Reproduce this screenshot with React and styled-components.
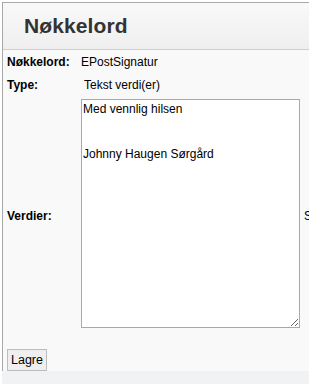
import React from 'react'
import styled, { createGlobalStyle } from 'styled-components'

const GlobalStyle = createGlobalStyle`
  html, body {
    margin: 0;
    padding: 0;
    background: #ffffff;
    overflow: hidden;
  }
  body {
    font-family: "Liberation Sans", Arial, sans-serif;
    font-size: 12px;
    color: #000;
  }
`

const Window = styled.div`
  height: 384px;
  padding: 2px 0 0 2px;
  box-sizing: border-box;
  display: flex;
  flex-direction: column;
`

const Panel = styled.div`
  flex: 1;
  display: flex;
  flex-direction: column;
  border-top: 1px solid #a9a9a9;
  border-left: 1px solid #a9a9a9;
  background: #f9f9f9;
`

const Header = styled.div`
  height: 47px;
  display: flex;
  align-items: center;
  padding: 0 0 1px 21px;
  box-sizing: border-box;
  background: linear-gradient(#f9f9f9, #efefef);
  border-bottom: 1px solid #cfcfcf;
`

const Title = styled.h1`
  margin: 0;
  font-size: 21px;
  font-weight: bold;
  color: #333;
  letter-spacing: 0.1px;
`

const Form = styled.div`
  display: grid;
  grid-template-columns: 74px 223px auto;
  grid-auto-rows: auto;
  align-items: center;
  padding: 1px 0 0 4px;
`

const Label = styled.div`
  font-weight: bold;
  height: ${p => (p.$tall ? 'auto' : '23px')};
  padding-top: ${p => (p.$tall ? '8px' : '0')};
  line-height: 23px;
  white-space: nowrap;
`

const Value = styled.div`
  height: 23px;
  line-height: 23px;
  padding-left: ${p => p.$indent || 0}px;
  white-space: nowrap;
`

const Hint = styled.div`
  white-space: nowrap;
  padding-top: 8px;
  line-height: 23px;
`

const Field = styled.textarea`
  display: block;
  width: 219px;
  height: 229px;
  margin: 2px 0 0;
  box-sizing: border-box;
  border: 1px solid #a9a9a9;
  background: #fff;
  padding: 2px 1px;
  font-family: "Liberation Sans", Arial, sans-serif;
  font-size: 12px;
  line-height: 15px;
  color: #000;
  outline: none;
`

const Actions = styled.div`
  flex: 1;
  display: flex;
  align-items: flex-end;
  padding-left: 4px;
`

const Button = styled.button`
  height: 22px;
  width: 40px;
  padding: 0;
  border: 1px solid #bdbdbd;
  background: #efefef;
  font-family: "Liberation Sans", Arial, sans-serif;
  font-size: 12.5px;
  color: #000;
  border-radius: 0;
`

const Footer = styled.div`
  height: 13px;
  background: #f1f2f4;
`

export default function App() {
  return (
    <>
      <GlobalStyle />
      <Window>
        <Panel>
          <Header>
            <Title>Nøkkelord</Title>
          </Header>
          <Form>
            <Label>Nøkkelord:</Label>
            <Value>EPostSignatur</Value>
            <span />
            <Label>Type:</Label>
            <Value $indent={3}>Tekst verdi(er)</Value>
            <span />
            <Label $tall>Verdier:</Label>
            <Field
              defaultValue={'Med vennlig hilsen\n\n\nJohnny Haugen Sørgård'}
            />
            <Hint>S</Hint>
          </Form>
          <Actions>
            <Button>Lagre</Button>
          </Actions>
        </Panel>
        <Footer />
      </Window>
    </>
  )
}
